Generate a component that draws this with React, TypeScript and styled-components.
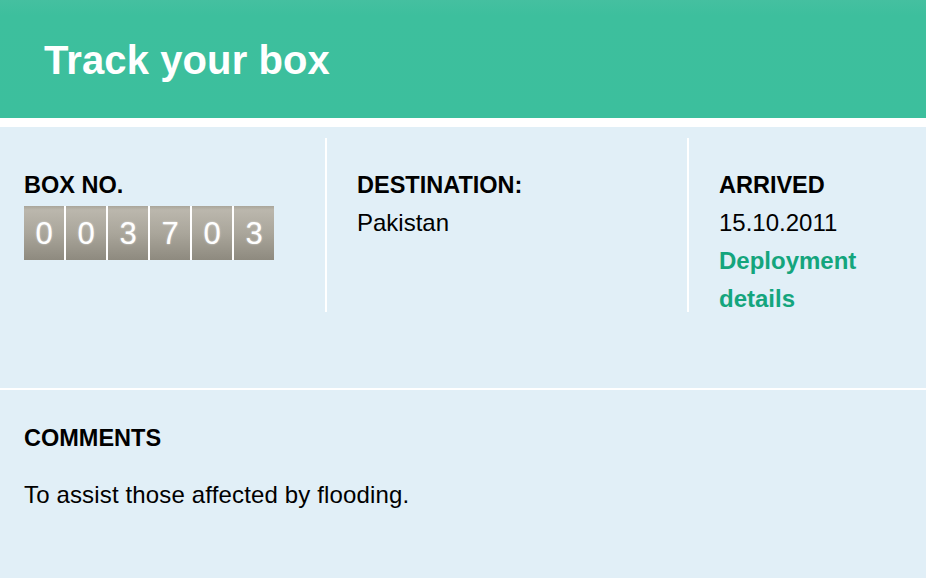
import React from "react";
import styled, { createGlobalStyle } from "styled-components";

const Global = createGlobalStyle`
  html, body { margin: 0; padding: 0; background: #e1eff7; }
  body { font-family: "Liberation Sans", Arial, Helvetica, sans-serif; color: #000; }
  #root { min-height: 100vh; background: #e1eff7; }
`;

const Header = styled.header`
  box-sizing: content-box;
  height: 78px;
  padding: 40px 0 0 44px;
  background: linear-gradient(#45c0a0 0, #3dbf9d 16px, #3cbf9d 100%);
  border-bottom: 9px solid #ffffff;
`;

const Title = styled.h1`
  margin: 0;
  font-size: 40px;
  line-height: 40px;
  font-weight: 700;
  color: #ffffff;
  letter-spacing: 0.1px;
`;

const InfoSection = styled.section`
  display: grid;
  grid-template-columns: 325px 362px 1fr;
  padding: 11px 0 76px;
`;

const Column = styled.div<{ $first?: boolean }>`
  height: 174px;
  box-sizing: border-box;
  padding: 28px 0 0 ${(p) => (p.$first ? "24px" : "30px")};
  border-left: ${(p) => (p.$first ? "none" : "2px solid #ffffff")};
`;

const Heading = styled.h2`
  margin: 0;
  font-size: 23.5px;
  line-height: 38px;
  font-weight: 700;
  text-transform: uppercase;
`;

const Text = styled.p`
  margin: 0;
  font-size: 24px;
  line-height: 38px;
`;

const Link = styled.a`
  display: block;
  width: 150px;
  font-size: 24px;
  line-height: 38px;
  font-weight: 700;
  color: #14a57d;
  text-decoration: none;
`;

const Odometer = styled.div`
  display: flex;
  margin-top: 2px;
`;

const Digit = styled.div`
  width: 40px;
  height: 54px;
  display: flex;
  align-items: center;
  justify-content: center;
  background: linear-gradient(#a9a59a 0, #bbb7ad 4px, #aaa69b 50%, #8e8a7f 100%);
  border-right: 2px solid #ffffff;
  &:last-child { border-right: none; }
`;

const DigitGlyph = styled.span`
  font-family: "Liberation Sans", Arial, sans-serif;
  font-size: 31px;
  line-height: 1;
  color: #ffffff;
  text-shadow: 0 0 2px rgba(255, 255, 255, 0.8), 0 0 1px rgba(90, 86, 76, 0.4);
`;

const CommentsSection = styled.section`
  border-top: 2px solid #ffffff;
  padding: 29px 24px 0;
`;

const CommentText = styled(Text)`
  margin-top: 19px;
  letter-spacing: 0.15px;
`;

export default function App() {
  const digits = "003703".split("");
  return (
    <>
      <Global />
      <Header>
        <Title>Track your box</Title>
      </Header>
      <InfoSection>
        <Column $first>
          <Heading>Box No.</Heading>
          <Odometer>
            {digits.map((d, i) => (
              <Digit key={i}>
                <DigitGlyph>{d}</DigitGlyph>
              </Digit>
            ))}
          </Odometer>
        </Column>
        <Column>
          <Heading>Destination:</Heading>
          <Text>Pakistan</Text>
        </Column>
        <Column>
          <Heading>Arrived</Heading>
          <Text>15.10.2011</Text>
          <Link href="#">Deployment details</Link>
        </Column>
      </InfoSection>
      <CommentsSection>
        <Heading>Comments</Heading>
        <CommentText>To assist those affected by flooding.</CommentText>
      </CommentsSection>
    </>
  );
}
